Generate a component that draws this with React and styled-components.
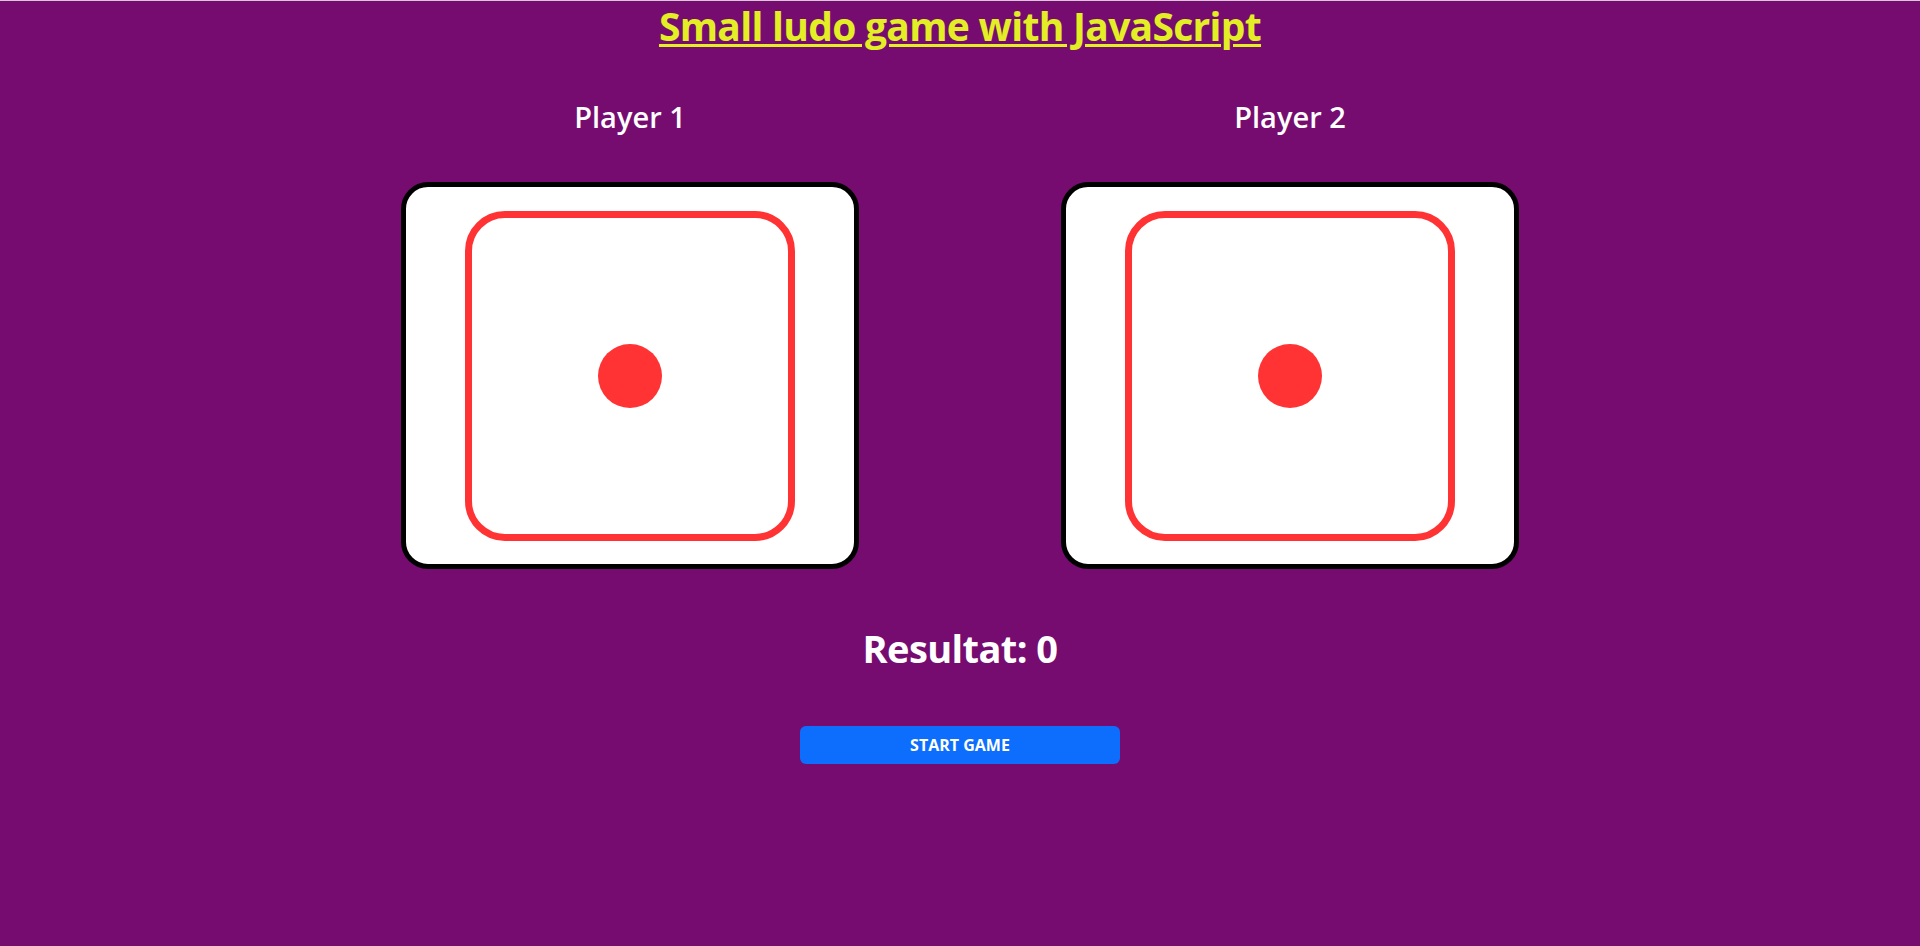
import React from "react";
import styled, { createGlobalStyle } from "styled-components";

const GlobalStyle = createGlobalStyle`
  html, body {
    margin: 0;
    padding: 0;
  }
  body {
    background: #760c70;
    border-top: 1px solid #d9c9d8;
    min-height: 945px;
    font-family: "Open Sans", "Noto Sans", sans-serif;
  }
  * { box-sizing: border-box; }
`;

const Page = styled.main`
  display: flex;
  flex-direction: column;
  align-items: center;
  padding-top: 1px;
`;

const Title = styled.h1`
  margin: 0;
  font-size: 39px;
  line-height: 48px;
  font-weight: 700;
  letter-spacing: -0.7px;
  color: #e3ee25;
  text-decoration: underline;
  text-decoration-thickness: 3px;
  text-underline-offset: 3px;
  text-align: center;
`;

const Players = styled.section`
  display: flex;
  width: 1320px;
  margin-top: 50px;
`;

const PlayerColumn = styled.div`
  flex: 1;
  display: flex;
  flex-direction: column;
  align-items: center;
`;

const PlayerName = styled.h3`
  margin: 0;
  font-size: 29px;
  line-height: 34px;
  font-weight: 600;
  color: #ffffff;
`;

const DiceCard = styled.div`
  margin-top: 48px;
  width: 458px;
  height: 387px;
  background: #ffffff;
  border: 5px solid #000000;
  border-radius: 27px;
  display: flex;
  align-items: center;
  justify-content: center;
`;

const DieFace = styled.div`
  width: 330px;
  height: 330px;
  border: 7px solid #ff3333;
  border-radius: 40px;
  display: flex;
  align-items: center;
  justify-content: center;
`;

const Pip = styled.span`
  width: 64px;
  height: 64px;
  border-radius: 50%;
  background: #ff3333;
`;

const Result = styled.h1`
  margin: 55px 0 0;
  font-size: 38px;
  line-height: 48px;
  font-weight: 700;
  letter-spacing: -0.6px;
  color: #ffffff;
`;

const StartButton = styled.button`
  margin-top: 54px;
  width: 320px;
  height: 38px;
  border: none;
  border-radius: 6px;
  background: #0d6efd;
  color: #ffffff;
  font-family: "Open Sans", "Noto Sans", sans-serif;
  font-size: 16px;
  font-weight: 700;
  text-transform: uppercase;
  cursor: pointer;
`;

const players = ["Player 1", "Player 2"];

export default function App() {
  return (
    <>
      <GlobalStyle />
      <Page>
        <Title>Small ludo game with JavaScript</Title>
        <Players>
          {players.map((name) => (
            <PlayerColumn key={name}>
              <PlayerName>{name}</PlayerName>
              <DiceCard>
                <DieFace>
                  <Pip />
                </DieFace>
              </DiceCard>
            </PlayerColumn>
          ))}
        </Players>
        <Result>Resultat: 0</Result>
        <StartButton>Start game</StartButton>
      </Page>
    </>
  );
}
